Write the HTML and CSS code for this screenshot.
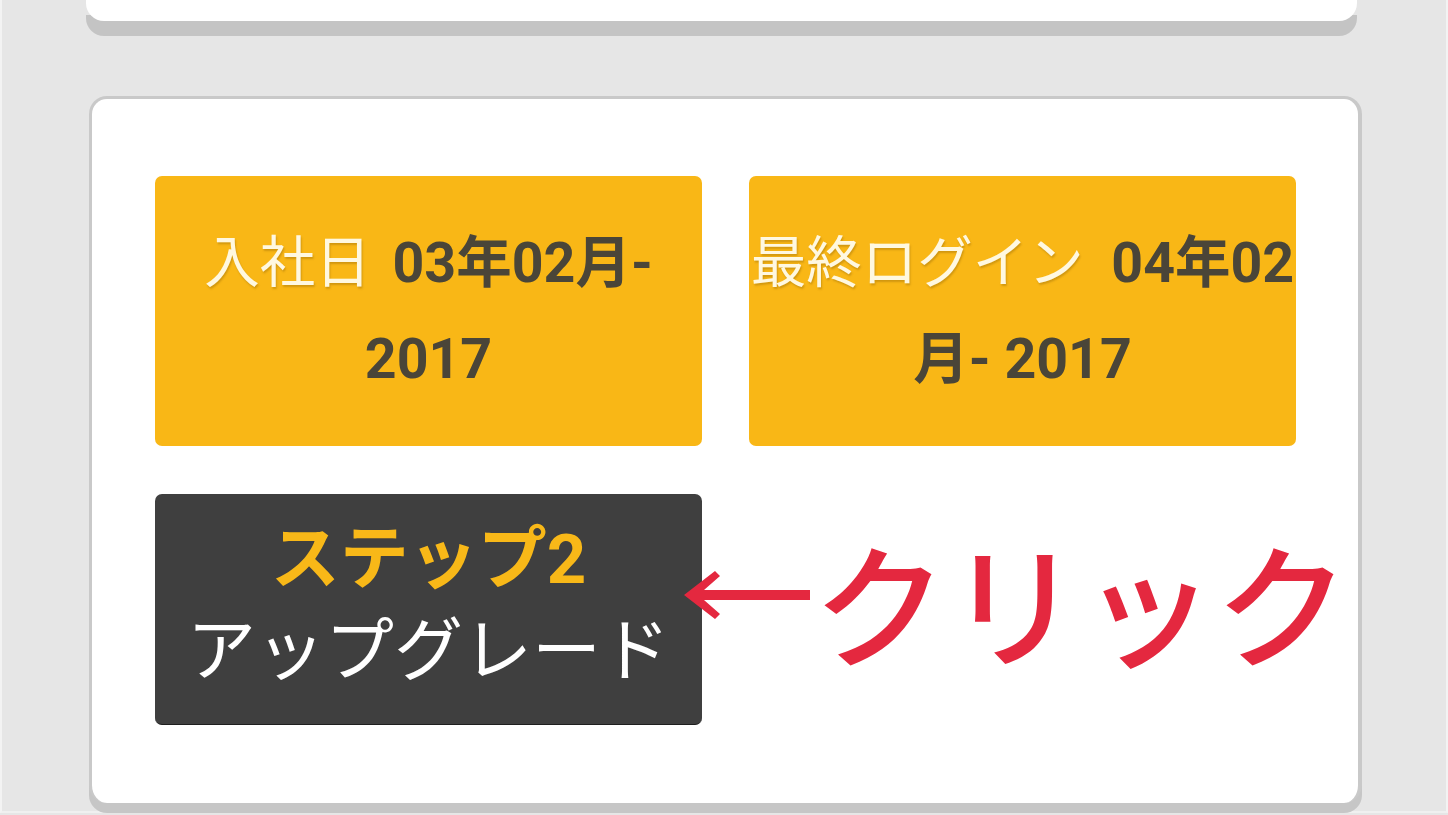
FILE: index.html
```html
<!DOCTYPE html>
<html lang="ja">
<head>
<meta charset="utf-8">
<title>プロフィール</title>
<link rel="stylesheet" href="styles.css">
</head>
<body>
<div class="page">
  <div class="card card-top"></div>
  <div class="card card-main">
    <div class="grid">
      <div class="tile tile-yellow">
        <p class="tile-text"><span class="label label-wide">入社日</span> <span class="value">03年02月-<br>2017</span></p>
      </div>
      <div class="tile tile-yellow">
        <p class="tile-text"><span class="label">最終ログイン</span>&nbsp; <span class="value">04年02<br>月- 2017</span></p>
      </div>
      <div class="tile tile-dark">
        <p class="tile-text step"><span class="step-title">ステップ2</span><br><span class="step-action">アップグレード</span></p>
      </div>
    </div>
    <div class="annotation">
      <svg class="arrow" width="132" height="55" viewBox="0 0 132 55" aria-hidden="true">
        <path d="M2 27 L33 3 L38 8 L22 22 L128 22 L128 32 L22 32 L38 46 L33 51 Z" fill="#e4283f"/>
      </svg>
      <span class="click-text">クリック</span>
    </div>
  </div>
</div>
</body>
</html>
```

FILE: styles.css
```css
html, body {
  margin: 0;
  padding: 0;
}
body {
  background: #e6e6e6;
  width: 1448px;
  height: 815px;
  overflow: hidden;
  font-family: Roboto, "Noto Sans CJK JP", sans-serif;
}
.page {
  position: relative;
  height: 813px;
  border-left: 2px solid #f3f3f3;
  border-right: 2px solid #f3f3f3;
  border-bottom: 2px solid #f0f0f0;
  box-sizing: border-box;
  width: 1448px;
}
.card {
  background: #ffffff;
  box-sizing: border-box;
}
.card-top {
  height: 21px;
  margin-left: 84px;
  width: 1271px;
  border-radius: 0 0 18px 18px;
  box-shadow: 0 15px 0 0 #c4c4c4;
}
.card-main {
  position: relative;
  margin-top: 75px;
  margin-left: 87px;
  width: 1273px;
  height: 707px;
  border: 3px solid #c9c9c9;
  border-right-width: 4px;
  border-bottom: none;
  border-radius: 18px;
  box-shadow: 0 10px 0 0 #c6c6c6;
  padding: 77px 0 0 63px;
}
.grid {
  display: grid;
  grid-template-columns: 547px 547px;
  grid-template-rows: 270px 231px;
  column-gap: 47px;
  row-gap: 48px;
}
.tile {
  border-radius: 7px;
  display: flex;
  align-items: center;
  justify-content: center;
  text-align: center;
}
.tile-yellow {
  background: #f9b716;
}
.tile-dark {
  background: #3f3f3f;
  border-bottom: 1px solid #1e1e1e;
}
.tile-text {
  margin: 0;
  font-size: 55.5px;
  line-height: 96px;
  white-space: nowrap;
  padding-bottom: 4px;
}
.label {
  font-family: "Noto Sans CJK JP", sans-serif;
  font-weight: 400;
  color: #fff8e0;
  text-shadow: 1px 2px 2px rgba(120, 80, 0, 0.3);
}
.label-wide {
  margin-right: 8px;
}
.value {
  font-family: Roboto, "Noto Sans CJK JP", sans-serif;
  font-weight: 700;
  color: #4a4538;
}
.step {
  font-size: 69px;
  line-height: 92px;
  padding-bottom: 6px;
}
.step-title {
  font-weight: 700;
  color: #f8b818;
}
.step-action {
  font-weight: 400;
  color: #ffffff;
}
.annotation {
  position: absolute;
  left: 590px;
  top: 434px;
  display: flex;
  align-items: center;
}
.arrow {
  display: block;
  margin-bottom: 10px;
}
.click-text {
  font-family: "Noto Sans CJK JP", sans-serif;
  font-weight: 500;
  font-size: 134px;
  line-height: 134px;
  color: #e4283f;
  margin-left: -1px;
}
```
